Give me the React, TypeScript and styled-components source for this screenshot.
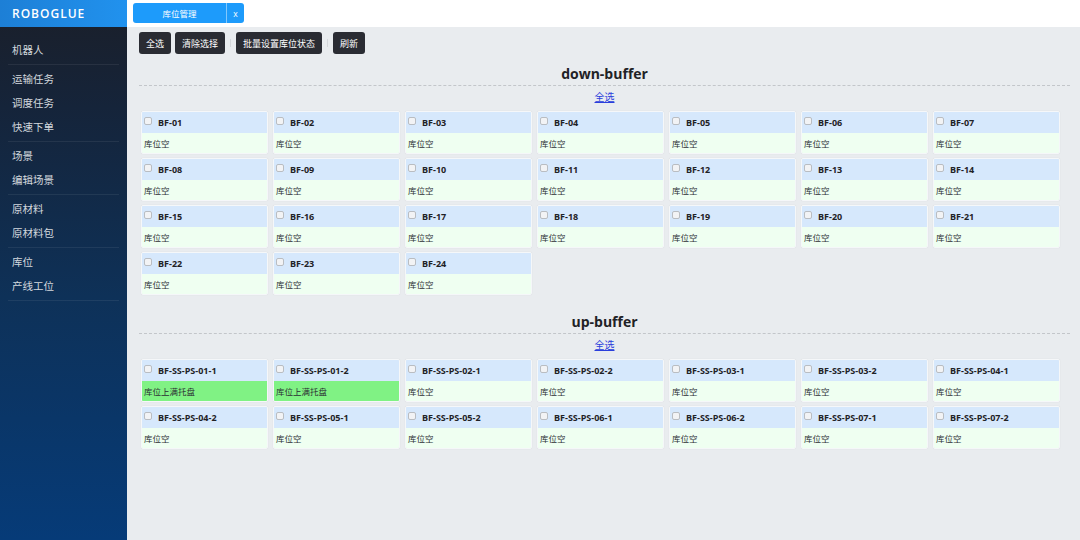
import React from "react";
import styled, { createGlobalStyle } from "styled-components";

const Global = createGlobalStyle`
  html, body { margin: 0; padding: 0; height: 100%; }
  body { font-family: "Open Sans", "Noto Sans CJK SC", sans-serif; }
  #root { height: 100vh; }
  * { box-sizing: border-box; }
`;

const Shell = styled.div`
  display: flex;
  height: 100vh;
  overflow: hidden;
`;

const Sidebar = styled.aside`
  width: 127px;
  flex-shrink: 0;
  display: flex;
  flex-direction: column;
  background: linear-gradient(180deg, #1b1f29 0%, #15243a 20%, #0e3158 55%, #063b78 100%);
`;

const Brand = styled.div`
  height: 27px;
  display: flex;
  align-items: center;
  padding-left: 12px;
  color: #fff;
  font-family: "Open Sans", sans-serif;
  font-weight: 600;
  font-size: 12px;
  letter-spacing: 1px;
  background: linear-gradient(90deg, #1d7fd6 0%, #2192ee 100%);
`;

const Nav = styled.nav`
  padding-top: 9px;
  display: flex;
  flex-direction: column;
`;

const NavGroup = styled.div`
  margin: 0 8px;
  padding: 2px 0;
  border-bottom: 1px solid rgba(255, 255, 255, 0.07);
`;

const NavItem = styled.div`
  height: 24px;
  line-height: 24px;
  padding-left: 4px;
  font-size: 10.5px;
  color: #d3d8de;
  font-family: "Noto Sans CJK SC", sans-serif;
`;

const Main = styled.main`
  flex: 1;
  display: flex;
  flex-direction: column;
  background: #e9ecef;
  min-width: 0;
`;

const TopBar = styled.div`
  height: 27px;
  background: #fff;
  display: flex;
  align-items: flex-start;
  padding: 3px 0 0 6px;
`;

const Tab = styled.div`
  display: flex;
  height: 20px;
  border-radius: 3px;
  background: #1d9bfb;
  color: #fff;
  font-size: 8.5px;
  font-family: "Noto Sans CJK SC", sans-serif;
  overflow: hidden;
`;

const TabLabel = styled.div`
  width: 93px;
  display: flex;
  align-items: center;
  justify-content: center;
`;

const TabClose = styled.div`
  width: 18px;
  display: flex;
  align-items: center;
  justify-content: center;
  border-left: 1px solid rgba(255, 255, 255, 0.45);
  font-family: "Open Sans", sans-serif;
`;

const Content = styled.div`
  flex: 1;
  padding: 5px 10px 0 12px;
  overflow: hidden;
`;

const Toolbar = styled.div`
  display: flex;
  align-items: center;
  gap: 4px;
`;

const Button = styled.button`
  height: 22px;
  padding: 0 7px;
  border: none;
  border-radius: 3px;
  background: #2a2c33;
  color: #fff;
  font-size: 9px;
  font-family: "Noto Sans CJK SC", sans-serif;
  cursor: pointer;
`;

const Divider = styled.span`
  width: 1px;
  height: 8px;
  margin: 0 1px;
  background: #d4d7db;
`;

const Section = styled.section<{ $first?: boolean }>`
  margin-top: ${(p) => (p.$first ? 10 : 17)}px;
`;

const Heading = styled.h3`
  margin: 0;
  height: 22px;
  line-height: 20px;
  text-align: center;
  font-size: 14px;
  font-weight: 700;
  color: #1f2226;
  border-bottom: 1px dashed #c3c6ca;
`;

const SelectAll = styled.a`
  display: block;
  width: max-content;
  margin: 4px auto 0;
  line-height: 14px;
  font-size: 10px;
  color: #2a3fdc;
  text-decoration: underline;
  font-family: "Noto Sans CJK SC", sans-serif;
  cursor: pointer;
`;

const Grid = styled.div`
  display: grid;
  grid-template-columns: repeat(7, 127px);
  column-gap: 5px;
  row-gap: 4px;
  margin: 7px 0 0 2px;
`;

const Card = styled.div`
  height: 43px;
  border: 1px solid #f5f7f9;
  border-radius: 2px;
  box-shadow: 0 0 1px rgba(0, 0, 0, 0.12);
  display: flex;
  flex-direction: column;
  overflow: hidden;
`;

const CardHead = styled.label`
  height: 21px;
  display: flex;
  align-items: center;
  padding-left: 1px;
  background: #d6e8fc;
  font-size: 9px;
  font-weight: 700;
  color: #1f2226;
`;

const Check = styled.span`
  width: 8px;
  height: 8px;
  margin: 0 6px 0 1px;
  border: 1px solid #b9bdc2;
  border-radius: 2px;
  background: #f2f3f5;
  position: relative;
  top: -2px;
`;

const CardBody = styled.div<{ $full?: boolean }>`
  flex: 1;
  display: flex;
  align-items: center;
  padding-left: 2px;
  font-size: 8.5px;
  color: #2b2e33;
  font-family: "Noto Sans CJK SC", sans-serif;
  background: ${(p) => (p.$full ? "#80f284" : "#effff1")};
`;

type Slot = { name: string; full?: boolean };

const down: Slot[] = Array.from({ length: 24 }, (_, i) => ({
  name: `BF-${String(i + 1).padStart(2, "0")}`,
}));

const up: Slot[] = [];
for (let i = 1; i <= 7; i++) {
  for (let j = 1; j <= 2; j++) {
    up.push({ name: `BF-SS-PS-0${i}-${j}`, full: i === 1 });
  }
}

const navGroups = [
  ["机器人"],
  ["运输任务", "调度任务", "快速下单"],
  ["场景", "编辑场景"],
  ["原材料", "原材料包"],
  ["库位", "产线工位"],
];

function Buffer({ title, slots, first }: { title: string; slots: Slot[]; first?: boolean }) {
  return (
    <Section $first={first}>
      <Heading>{title}</Heading>
      <SelectAll>全选</SelectAll>
      <Grid>
        {slots.map((s) => (
          <Card key={s.name}>
            <CardHead>
              <Check />
              {s.name}
            </CardHead>
            <CardBody $full={s.full}>{s.full ? "库位上满托盘" : "库位空"}</CardBody>
          </Card>
        ))}
      </Grid>
    </Section>
  );
}

export default function App() {
  return (
    <>
      <Global />
      <Shell>
        <Sidebar>
          <Brand>ROBOGLUE</Brand>
          <Nav>
            {navGroups.map((g, i) => (
              <NavGroup key={i}>
                {g.map((t) => (
                  <NavItem key={t}>{t}</NavItem>
                ))}
              </NavGroup>
            ))}
          </Nav>
        </Sidebar>
        <Main>
          <TopBar>
            <Tab>
              <TabLabel>库位管理</TabLabel>
              <TabClose>x</TabClose>
            </Tab>
          </TopBar>
          <Content>
            <Toolbar>
              <Button>全选</Button>
              <Button>清除选择</Button>
              <Divider />
              <Button>批量设置库位状态</Button>
              <Divider />
              <Button>刷新</Button>
            </Toolbar>
            <Buffer title="down-buffer" slots={down} first />
            <Buffer title="up-buffer" slots={up} />
          </Content>
        </Main>
      </Shell>
    </>
  );
}
